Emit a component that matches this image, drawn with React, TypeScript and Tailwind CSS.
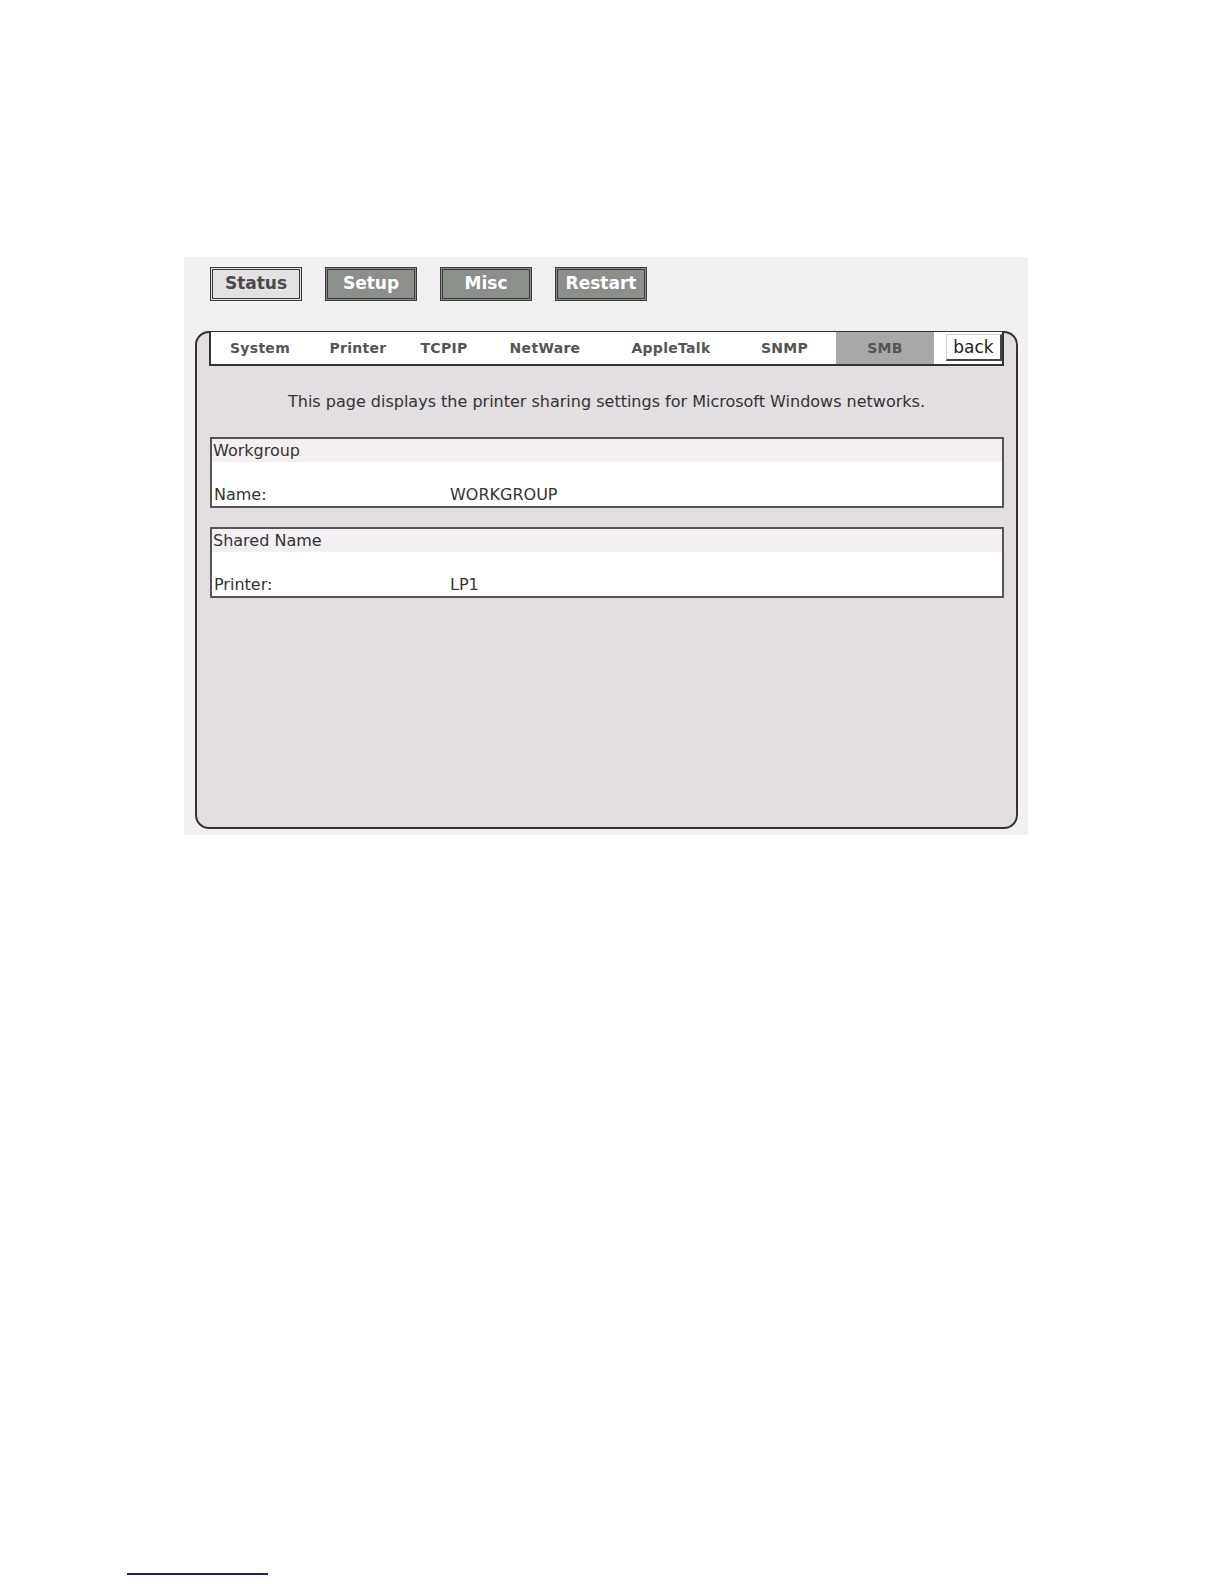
import React from 'react';

const font = { fontFamily: '"DejaVu Sans", Verdana, sans-serif' };

const topButtons = [
  { label: 'Status', active: true },
  { label: 'Setup', active: false },
  { label: 'Misc', active: false },
  { label: 'Restart', active: false },
];

const tabs = [
  { label: 'System', w: 'w-[98px]' },
  { label: 'Printer', w: 'w-[98px]' },
  { label: 'TCPIP', w: 'w-[74px]' },
  { label: 'NetWare', w: 'w-[128px]' },
  { label: 'AppleTalk', w: 'w-[124px]' },
  { label: 'SNMP', w: 'w-[103px]' },
];

const InfoBox = ({ title, label, value }: { title: string; label: string; value: string }) => (
  <div className="border-2 border-[#555] bg-white">
    <div className="h-[23px] bg-[#f3eff3] pl-[1px] text-[16px] leading-[23px] text-[#333]">{title}</div>
    <div className="h-[22px]" />
    <div className="flex h-[22px] items-center text-[16px] text-[#333]">
      <span className="w-[238px] pl-[2px]">{label}</span>
      <span>{value}</span>
    </div>
  </div>
);

const App = () => {
  return (
    <div className="bg-white" style={font}>
      <div className="pt-[257px] pl-[184px]">
        <div className="w-[844px] h-[578px] bg-[#f3f0f3] pt-[10px] pl-[11px] pr-[10px]">
          <div className="flex gap-[23px] pl-[15px]">
            {topButtons.map((b) => (
              <button
                key={b.label}
                className={
                  'w-[92px] h-[34px] border-[3px] border-double border-[#3a3a3a] text-[17px] font-bold ' +
                  (b.active ? 'bg-[#e3e0e3] text-[#4a4a4a]' : 'bg-[#8b908b] text-white')
                }
              >
                {b.label}
              </button>
            ))}
          </div>

          <div className="mt-[30px] h-[498px] rounded-[14px] border-2 border-[#333] bg-[#e2dee2] px-[12px]">
            <div className="-mt-[1px] flex h-[34px] border-2 border-t-0 border-[#333] bg-white">
              {tabs.map((t) => (
                <div
                  key={t.label}
                  className={t.w + ' flex items-center justify-center text-[14px] font-bold tracking-[0.3px] text-[#555]'}
                >
                  {t.label}
                </div>
              ))}
              <div className="flex w-[98px] items-center justify-center bg-[#a6a9a6] text-[14px] font-bold tracking-[0.3px] text-[#555]">
                SMB
              </div>
              <div className="flex flex-1 items-start justify-end pt-[2px]">
                <button className="h-[27px] w-[56px] border border-[#ccc] border-r-2 border-b-2 border-r-[#444] border-b-[#444] bg-white text-[17px] leading-[22px] text-[#222]">
                  back
                </button>
              </div>
            </div>

            <p className="mt-[24px] text-center text-[16px] text-[#333]">
              This page displays the printer sharing settings for Microsoft Windows networks.
            </p>

            <div className="mt-[23px] flex flex-col gap-[19px] pl-[1px]">
              <InfoBox title="Workgroup" label="Name:" value="WORKGROUP" />
              <InfoBox title="Shared Name" label="Printer:" value="LP1" />
            </div>
          </div>
        </div>
      </div>

      <div className="mt-[738px] ml-[127px] h-[2px] w-[141px] bg-[#1c1c8a]" />
    </div>
  );
};

export default App;
